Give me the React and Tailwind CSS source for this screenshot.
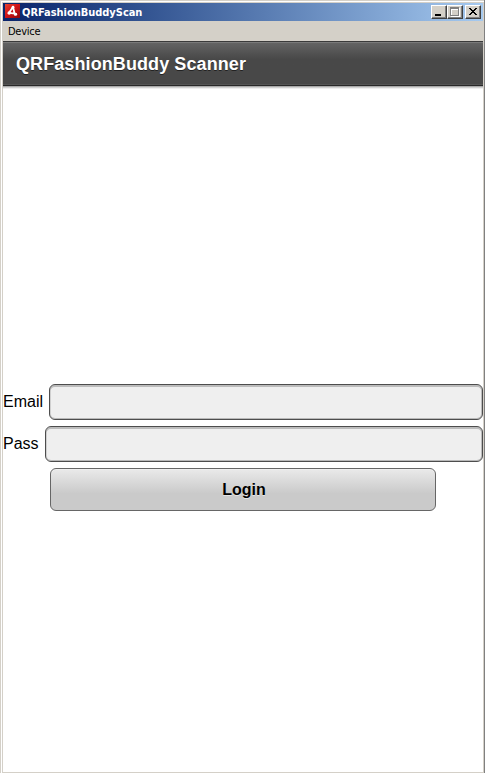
function TitleButton({ children, className = "" }) {
  return (
    <div
      className={`h-[14px] w-4 border border-t-white border-l-white border-r-[#404040] border-b-[#404040] bg-[#d4d0c8] shadow-[inset_-1px_-1px_0_#808080] ${className}`}
    >
      <svg className="block h-3 w-[14px]" viewBox="0 0 14 12" shapeRendering="crispEdges">
        {children}
      </svg>
    </div>
  );
}

function TitleBar() {
  return (
    <div className="flex h-[18px] items-center bg-linear-to-r from-[#0a246a] to-[#a6caf0] pr-[2px] pl-[2px]">
      <svg className="h-4 w-[15px] shrink-0" viewBox="0 0 15 16">
        <defs>
          <linearGradient id="air" x1="0" y1="0" x2="1" y2="1">
            <stop offset="0" stopColor="#e8452f" />
            <stop offset="0.45" stopColor="#d31518" />
            <stop offset="1" stopColor="#8e080c" />
          </linearGradient>
        </defs>
        <rect x="0" y="0" width="15" height="14" fill="url(#air)" />
        <path
          d="M7.8 3.2 L4 8.8 L11.6 9.8 M8 3 L10 11.2"
          fill="none"
          stroke="#fff"
          strokeWidth="1.8"
        />
        <circle cx="8" cy="3.2" r="1.4" fill="#fff" />
        <circle cx="4.2" cy="9" r="1.7" fill="#fff" />
        <circle cx="10.6" cy="10.2" r="1.5" fill="#fff" />
      </svg>
      <span className="ml-[2px] pt-px font-['DejaVu_Sans_Condensed','DejaVu_Sans',sans-serif] text-[11px] leading-[17px] font-bold tracking-[-0.03px] whitespace-nowrap text-white [font-stretch:condensed]">
        QRFashionBuddyScan
      </span>
      <div className="ml-auto flex">
        <TitleButton>
          <path d="M3 8h6v2H3z" fill="#000" />
        </TitleButton>
        <TitleButton>
          <path d="M3 2h9v9H3z M4 4v6h7V4z" fill="#fff" fillRule="evenodd" />
          <path d="M2 1h9v9H2z M3 3v6h7V3z" fill="#808080" fillRule="evenodd" />
        </TitleButton>
        <TitleButton className="ml-[2px]">
          <path
            d="M3 2h2v1h1v1h2V3h1V2h2v1h-1v1H9v1H8v1h1v1h1v1h1v1H9V8H8V7H6v1H5v1H3V8h1V7h1V6h1V5H5V4H4V3H3z"
            fill="#000"
          />
        </TitleButton>
      </div>
    </div>
  );
}

function Field({ label, type, gap }) {
  return (
    <label className={`flex h-9 items-center font-['Liberation_Sans',Arial,sans-serif] text-base text-black ${gap}`}>
      <span className="w-10 shrink-0 whitespace-nowrap">{label}</span>
      <input
        type={type}
        className="h-9 min-w-0 flex-1 rounded-[6px] border border-[#4d4d4d] bg-[#efefef] px-2 shadow-[inset_0_2px_0_#bcbcbc,inset_1px_0_0_#d0d0d0,inset_-1px_0_0_#bcbcbc,inset_0_-1px_0_#b8b8b8] outline-none"
      />
    </label>
  );
}

export default function App() {
  return (
    <div className="flex h-[773px] w-[485px] flex-col overflow-hidden border-r border-l border-r-[#808080] border-l-[#d4d0c8] bg-[#d4d0c8]">
      <div className="mt-px flex flex-1 flex-col border-t border-l border-white pt-px pr-px pb-px pl-px">
        <TitleBar />
        <div className="flex h-5 items-center pt-[2px] pl-[5px] font-['DejaVu_Sans_Condensed','DejaVu_Sans',sans-serif] text-[11px] tracking-[-0.25px] text-black [font-stretch:condensed]">
          Device
        </div>
        <main className="flex flex-1 flex-col bg-white">
          <header className="flex h-[45px] shrink-0 items-center border-t border-b border-t-[#3a3a3a] border-b-[#292929] bg-linear-to-b from-[#656565] to-[#484848] to-40% pt-px pl-[13px] shadow-[inset_0_1px_0_#7a7a7a,inset_0_-1px_0_#555,0_1px_0_#aaa,0_2px_0_#d2d2d2,0_3px_0_#efefef]">
            <h1 className="font-['Liberation_Sans',Arial,sans-serif] text-[18px] font-bold tracking-[0.09px] text-white [text-shadow:0_1px_0_#222]">
              QRFashionBuddy Scanner
            </h1>
          </header>
          <form className="mt-[298px] flex flex-col gap-[6px]">
            <Field label="Email" type="text" gap="gap-[6px]" />
            <Field label="Pass" type="password" gap="gap-[2px]" />
            <button
              type="button"
              className="ml-[47px] h-[43px] w-[386px] rounded-[6px] border border-[#666] bg-linear-to-b from-[#eaeaea] to-[#cacaca] to-60% pl-[2px] font-['Liberation_Sans',Arial,sans-serif] text-base font-bold text-black shadow-[inset_0_1px_0_#f0f0f0] [text-shadow:0_1px_0_#e5e5e5]"
            >
              Login
            </button>
          </form>
        </main>
      </div>
    </div>
  );
}
